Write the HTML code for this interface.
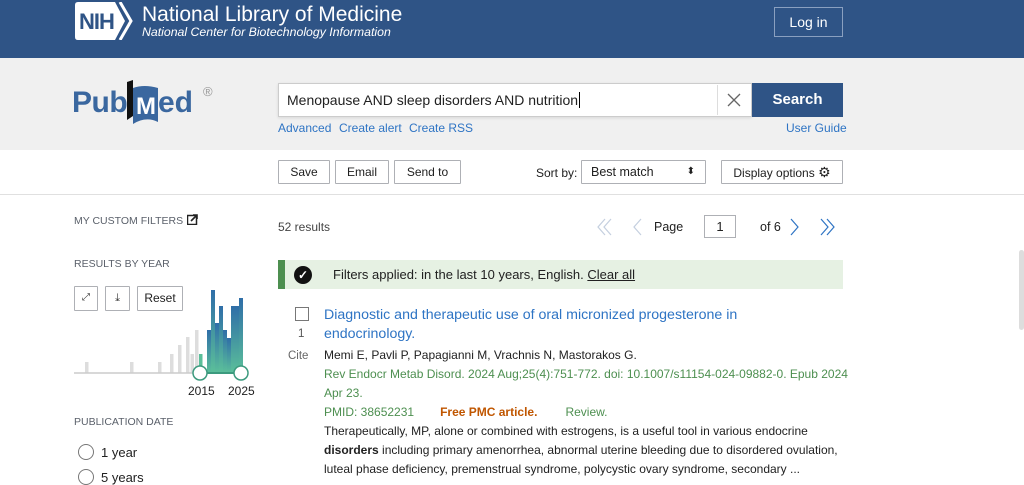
<!DOCTYPE html>
<html><head><meta charset="utf-8"><style>
*{margin:0;padding:0;box-sizing:border-box}
body{width:1024px;height:481px;overflow:hidden;position:relative;font-family:"Liberation Sans",sans-serif;background:#fff;color:#212121}
.a{position:absolute}
.btn{position:absolute;border:1px solid #aeb0b5;background:#fff;font-size:12px;color:#212121;text-align:center;line-height:22px;border-radius:1px}
.lk{color:#2e74c4;font-size:12px}
.ttl{font-size:10.5px;color:#5b616b}
</style></head><body>
<div class="a" style="left:0;top:0;width:1024px;height:58px;background:#2f5486"></div>
<div class="a" style="left:75px;top:2px;width:58px;height:38px">
<svg width="58" height="38"><path d="M0 3 Q0 0 3 0 H40 L50 19 L40 38 H3 Q0 38 0 35Z" fill="#fff"/><path d="M45 0 L56 19 L45 38" stroke="#fff" stroke-width="3" fill="none"/></svg>
<div class="a" style="left:4px;top:7px;font-size:22px;font-weight:bold;color:#2f5486;letter-spacing:-1px">NIH</div></div>
<div class="a" style="left:142px;top:3px;color:#fff;font-size:21px">National Library of Medicine</div>
<div class="a" style="left:142px;top:25px;color:#fff;font-size:12.3px;font-style:italic">National Center for Biotechnology Information</div>
<div class="a" style="left:774px;top:7px;width:69px;height:30px;border:1px solid #8aa0c0;color:#fff;font-size:14px;text-align:center;line-height:28px">Log in</div>
<div class="a" style="left:0;top:58px;width:1024px;height:92px;background:#f0f0f0"></div>
<div class="a" style="left:72px;top:86px;font-size:30px;font-weight:bold;color:#3a679f;letter-spacing:-0.5px">Pub</div>
<svg class="a" style="left:124px;top:78px" width="40" height="50"><path d="M3 4 L9 2 L9 38 L3 42Z" fill="#111"/><path d="M9 10 Q20 6 34 10 L34 44 Q22 38 9 46Z" fill="#3a679f"/><text x="12" y="36" font-family="Liberation Sans" font-weight="bold" font-size="24" fill="#fff">M</text></svg>
<div class="a" style="left:158px;top:86px;font-size:30px;font-weight:bold;color:#3a679f">ed</div>
<div class="a" style="left:203px;top:84px;font-size:13px;color:#999">®</div>
<div class="a" style="left:278px;top:83px;width:474px;height:34px;background:#fff;border:1px solid #ccc;box-shadow:0 1px 3px rgba(0,0,0,.1)"></div>
<div class="a" style="left:287px;top:92px;font-size:14px;color:#212121">Menopause AND sleep disorders AND nutrition<span style="border-left:1px solid #000;margin-left:1px"></span></div>
<div class="a" style="left:717px;top:85px;width:1px;height:30px;background:#ddd"></div>
<svg class="a" style="left:727px;top:93px" width="14" height="14"><path d="M1 1L13 13M13 1L1 13" stroke="#666" stroke-width="1.3"/></svg>
<div class="a" style="left:752px;top:83px;width:91px;height:34px;background:#2f5486;color:#fff;font-weight:bold;font-size:15px;text-align:center;line-height:34px">Search</div>
<div class="a lk" style="left:278px;top:121px">Advanced</div>
<div class="a lk" style="left:339px;top:121px">Create alert</div>
<div class="a lk" style="left:409px;top:121px">Create RSS</div>
<div class="a lk" style="left:786px;top:121px">User Guide</div>
<div class="a" style="left:0;top:194px;width:1024px;height:1px;background:#e0e0e0"></div>
<div class="btn" style="left:278px;top:160px;width:52px;height:24px">Save</div>
<div class="btn" style="left:335px;top:160px;width:54px;height:24px">Email</div>
<div class="btn" style="left:394px;top:160px;width:67px;height:24px">Send to</div>
<div class="a" style="left:536px;top:166px;font-size:12px">Sort by:</div>
<div class="btn" style="left:581px;top:160px;width:125px;height:24px;text-align:left;padding-left:9px;font-size:12.5px">Best match<span class="a" style="right:10px;top:0;font-size:10px">⬍</span></div>
<div class="btn" style="left:721px;top:160px;width:122px;height:24px">Display options <span style="font-size:14px">⚙</span></div>
<div class="a ttl" style="left:74px;top:215px">MY CUSTOM FILTERS</div>
<svg class="a" style="left:187px;top:214px" width="11" height="11"><rect x="0.5" y="1.5" width="9" height="9" fill="none" stroke="#222" stroke-width="1.5"/><path d="M4 7 L10 1 M6 1 H10 V5" stroke="#222" stroke-width="1.6" fill="none"/></svg>
<div class="a ttl" style="left:74px;top:258px">RESULTS BY YEAR</div>
<div class="btn" style="left:74px;top:286px;width:24px;height:25px;font-size:10px;color:#333">⤢</div>
<div class="btn" style="left:105px;top:286px;width:25px;height:25px;font-size:11px;color:#333">⤓</div>
<div class="btn" style="left:137px;top:286px;width:46px;height:25px">Reset</div>
<svg class="a" style="left:74px;top:280px" width="185" height="120">
<defs><linearGradient id="g" x1="0" y1="0" x2="0" y2="1"><stop offset="0" stop-color="#2f6ea8"/><stop offset="1" stop-color="#5bbf9a"/></linearGradient></defs>
<g fill="#ddd"><rect x="11" y="82" width="3.5" height="11"/><rect x="56" y="82" width="3.5" height="11"/><rect x="84" y="82" width="3.5" height="11"/><rect x="96" y="74" width="3.5" height="19"/><rect x="104" y="65" width="3.5" height="28"/><rect x="112" y="57" width="3.5" height="36"/><rect x="116.5" y="74" width="3.5" height="19"/><rect x="121" y="50" width="3.5" height="43"/></g>
<g fill="url(#g)"><rect x="125" y="74" width="3.5" height="19" fill="#5bbf9a"/><rect x="133" y="50" width="4" height="43"/><rect x="137" y="10" width="4" height="83"/><rect x="141" y="43" width="4" height="50"/><rect x="145" y="26" width="4" height="67"/><rect x="149" y="50" width="4" height="43"/><rect x="153" y="58" width="4" height="35"/><rect x="157" y="26" width="4" height="67"/><rect x="161" y="26" width="4" height="67"/><rect x="165" y="18" width="4" height="75"/></g>
<line x1="0" y1="93" x2="170" y2="93" stroke="#ccc" stroke-width="1.5"/>
<line x1="126" y1="93" x2="167" y2="93" stroke="#3c9a7e" stroke-width="2"/>
<circle cx="126" cy="93" r="7" fill="#fff" stroke="#3c9a7e" stroke-width="1.5"/><circle cx="167" cy="93" r="7" fill="#fff" stroke="#3c9a7e" stroke-width="1.5"/>
<text x="114" y="115" font-family="Liberation Sans" font-size="12" fill="#212121">2015</text><text x="154" y="115" font-family="Liberation Sans" font-size="12" fill="#212121">2025</text>
</svg>
<div class="a ttl" style="left:74px;top:416px">PUBLICATION DATE</div>
<div class="a" style="left:78px;top:444px;width:16px;height:16px;border:1px solid #777;border-radius:50%"></div>
<div class="a" style="left:101px;top:445px;font-size:13px">1 year</div>
<div class="a" style="left:78px;top:469px;width:16px;height:16px;border:1px solid #777;border-radius:50%"></div>
<div class="a" style="left:101px;top:470px;font-size:13px">5 years</div>
<div class="a" style="left:278px;top:220px;font-size:12px;color:#444">52 results</div>
<svg class="a" style="left:597px;top:218px" width="240" height="18" fill="none" stroke-width="1.2">
<path d="M8 1 L1 9 L8 17 M14 1 L7 9 L14 17" stroke="#c4cfdf"/>
<path d="M44 1 L37 9 L44 17" stroke="#c4cfdf"/>
<path d="M194 1 L201 9 L194 17" stroke="#2e74c4"/>
<path d="M224 1 L231 9 L224 17 M230 1 L237 9 L230 17" stroke="#2e74c4"/>
</svg>
<div class="a" style="left:654px;top:220px;font-size:12.5px">Page</div>
<div class="a" style="left:704px;top:215px;width:32px;height:23px;border:1px solid #aeb0b5;font-size:13px;text-align:center;line-height:21px">1</div>
<div class="a" style="left:760px;top:220px;font-size:12.5px">of 6</div>
<div class="a" style="left:278px;top:260px;width:565px;height:29px;background:#e6f1e3;border-left:7px solid #4d8f50"></div>
<div class="a" style="left:294px;top:266px;width:18px;height:18px;border-radius:50%;background:#111;color:#fff;font-size:12px;text-align:center;line-height:18px;font-weight:bold">✓</div>
<div class="a" style="left:333px;top:267px;font-size:13px">Filters applied: in the last 10 years, English. <u>Clear all</u></div>
<div class="a" style="left:295px;top:307px;width:14px;height:14px;border:1px solid #777"></div>
<div class="a" style="left:298px;top:328px;font-size:11.5px;color:#555">1</div>
<div class="a" style="left:288px;top:350px;font-size:11.5px;color:#666">Cite</div>
<div class="a" style="left:324px;top:306px;font-size:14.2px;color:#2e74c4;line-height:19px;width:430px">Diagnostic and therapeutic use of oral micronized progesterone in endocrinology.</div>
<div class="a" style="left:324px;top:346px;font-size:12px;line-height:19px;width:520px">Memi E, Pavli P, Papagianni M, Vrachnis N, Mastorakos G.<br>
<span style="color:#4d8f50;white-space:nowrap">Rev Endocr Metab Disord. 2024 Aug;25(4):751-772. doi: 10.1007/s11154-024-09882-0. Epub 2024</span><br><span style="color:#4d8f50">Apr 23.</span><br>
<span style="color:#4d8f50;line-height:19px">PMID: 38652231</span><span style="color:#c05600;font-weight:bold;margin-left:26px">Free PMC article.</span><span style="color:#4d8f50;margin-left:28px">Review.</span><br>
<span style="display:block;margin-top:0">Therapeutically, MP, alone or combined with estrogens, is a useful tool in various endocrine <b>disorders</b> including primary amenorrhea, abnormal uterine bleeding due to disordered ovulation, luteal phase deficiency, premenstrual syndrome, polycystic ovary syndrome, secondary ...</span></div>
<div class="a" style="left:1019px;top:250px;width:5px;height:80px;background:#ddd;border-radius:3px"></div>
</body></html>
